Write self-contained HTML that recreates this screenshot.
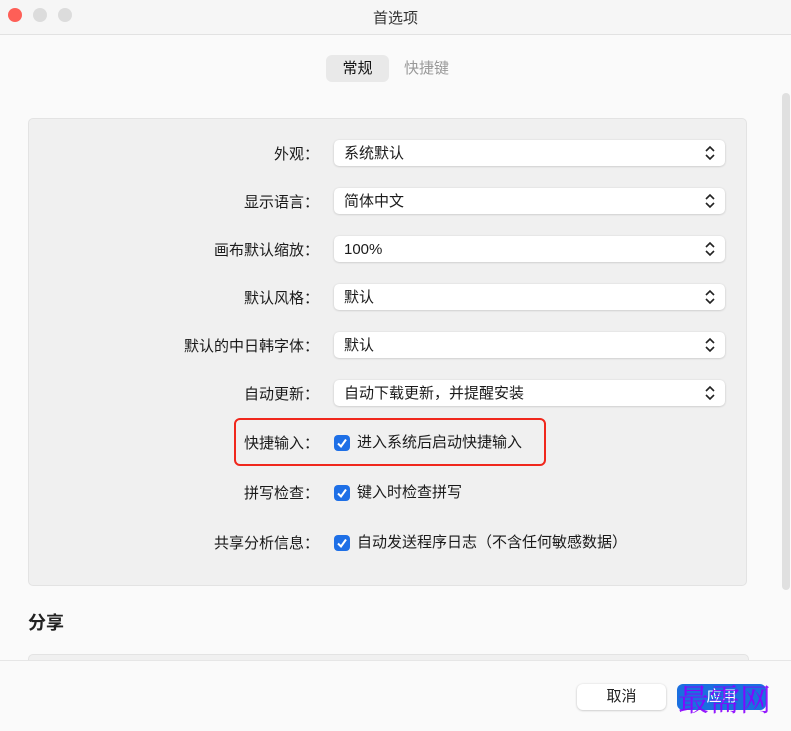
<!DOCTYPE html>
<html><head><meta charset="utf-8"><style>
body{margin:0;width:791px;height:730px;overflow:hidden;background:#fafafa;font-family:"Liberation Sans","Noto Sans CJK SC",sans-serif;position:relative;color:#222}
.tb{position:absolute;left:0;top:0;width:791px;height:34px;background:#f6f6f6;border-bottom:1px solid #e2e2e2}
.dot{position:absolute;top:8px;width:14px;height:14px;border-radius:50%;background:#dcdcdc}
.title{position:absolute;top:7px;width:791px;text-align:center;font-size:15px;color:#333}
.tab{position:absolute;top:55px;height:27px;line-height:27px;font-size:15px}
.panel{position:absolute;left:28px;top:118px;width:717px;height:466px;background:#f0f0f0;border:1px solid #e3e3e3;border-radius:5px}
.lbl{position:absolute;right:472px;font-size:15px;color:#1a1a1a;white-space:nowrap;font-family:"Noto Sans CJK SC",sans-serif;line-height:20px}
.sel{position:absolute;left:334px;width:391px;height:26px;background:#fff;border-radius:5px;box-shadow:0 0.5px 2px rgba(0,0,0,.2);font-size:15px;line-height:26px;box-sizing:border-box;padding-left:10px;padding-top:1px;color:#1a1a1a}
.sel svg{position:absolute;right:9px;top:5px}
.cb{position:absolute;left:334px;width:16px;height:16px;background:#1e6fe6;border-radius:4px}
.ct{position:absolute;left:357px;font-size:15px;white-space:nowrap;line-height:20px;color:#1a1a1a}
.btn{position:absolute;top:684px;height:26px;width:89px;border-radius:6px;text-align:center;line-height:26px;font-size:15px}
</style></head><body>
<div class="tb"><div class="dot" style="left:8px;background:#fe5f57"></div><div class="dot" style="left:33px"></div><div class="dot" style="left:58px"></div><div class="title">首选项</div></div>
<div class="tab" style="left:326px;width:63px;background:#e9e9e9;border-radius:6px;text-align:center;color:#111">常规</div>
<div class="tab" style="left:404px;color:#999">快捷键</div>
<div style="position:absolute;left:782px;top:93px;width:8px;height:497px;background:#e0e0e0;border-radius:4px"></div>
<div class="panel"></div>
<div class="lbl" style="top:144px">外观：</div>
<div class="lbl" style="top:192px">显示语言：</div>
<div class="lbl" style="top:240px">画布默认缩放：</div>
<div class="lbl" style="top:288px">默认风格：</div>
<div class="lbl" style="top:336px">默认的中日韩字体：</div>
<div class="lbl" style="top:384px">自动更新：</div>
<div class="lbl" style="top:433px">快捷输入：</div>
<div class="lbl" style="top:483px">拼写检查：</div>
<div class="lbl" style="top:533px">共享分析信息：</div>
<div class="sel" style="top:140px">系统默认<svg width="12" height="16"><path d="M2 6L6 2L10 6M2 10L6 14L10 10" fill="none" stroke="#222" stroke-width="1.6"/></svg></div>
<div class="sel" style="top:188px">简体中文<svg width="12" height="16"><path d="M2 6L6 2L10 6M2 10L6 14L10 10" fill="none" stroke="#222" stroke-width="1.6"/></svg></div>
<div class="sel" style="top:236px">100%<svg width="12" height="16"><path d="M2 6L6 2L10 6M2 10L6 14L10 10" fill="none" stroke="#222" stroke-width="1.6"/></svg></div>
<div class="sel" style="top:284px">默认<svg width="12" height="16"><path d="M2 6L6 2L10 6M2 10L6 14L10 10" fill="none" stroke="#222" stroke-width="1.6"/></svg></div>
<div class="sel" style="top:332px">默认<svg width="12" height="16"><path d="M2 6L6 2L10 6M2 10L6 14L10 10" fill="none" stroke="#222" stroke-width="1.6"/></svg></div>
<div class="sel" style="top:380px">自动下载更新，并提醒安装<svg width="12" height="16"><path d="M2 6L6 2L10 6M2 10L6 14L10 10" fill="none" stroke="#222" stroke-width="1.6"/></svg></div>
<div class="cb" style="top:435px"><svg width="16" height="16"><path d="M4 8.5L7 11.5L12 4.5" fill="none" stroke="#fff" stroke-width="2"/></svg></div>
<div class="ct" style="top:433px">进入系统后启动快捷输入</div>
<div class="cb" style="top:485px"><svg width="16" height="16"><path d="M4 8.5L7 11.5L12 4.5" fill="none" stroke="#fff" stroke-width="2"/></svg></div>
<div class="ct" style="top:483px">键入时检查拼写</div>
<div class="cb" style="top:535px"><svg width="16" height="16"><path d="M4 8.5L7 11.5L12 4.5" fill="none" stroke="#fff" stroke-width="2"/></svg></div>
<div class="ct" style="top:533px">自动发送程序日志（不含任何敏感数据）</div>
<div style="position:absolute;left:234px;top:418px;width:312px;height:48px;border:2.5px solid #f0271c;border-radius:6px;box-sizing:border-box"></div>
<div style="position:absolute;left:28px;top:609px;font-size:18px;font-weight:bold;color:#222">分享</div>
<div style="position:absolute;left:28px;top:654px;width:719px;height:10px;background:#f0f0f0;border:1px solid #e3e3e3;border-radius:5px"></div>
<div style="position:absolute;left:0;top:660px;width:791px;height:70px;background:#fafafa;border-top:1px solid #e6e6e6"></div>
<div class="btn" style="left:577px;background:#fff;box-shadow:0 0.5px 2px rgba(0,0,0,.25);color:#222">取消</div>
<div class="btn" style="left:677px;background:#1a6fe0;color:#fff">应用</div>
<div style="position:absolute;left:678px;top:680px;font-size:31px;line-height:36px;color:#8b00ff;font-family:'Noto Serif CJK SC',serif;opacity:.9">最需网</div>
</body></html>
